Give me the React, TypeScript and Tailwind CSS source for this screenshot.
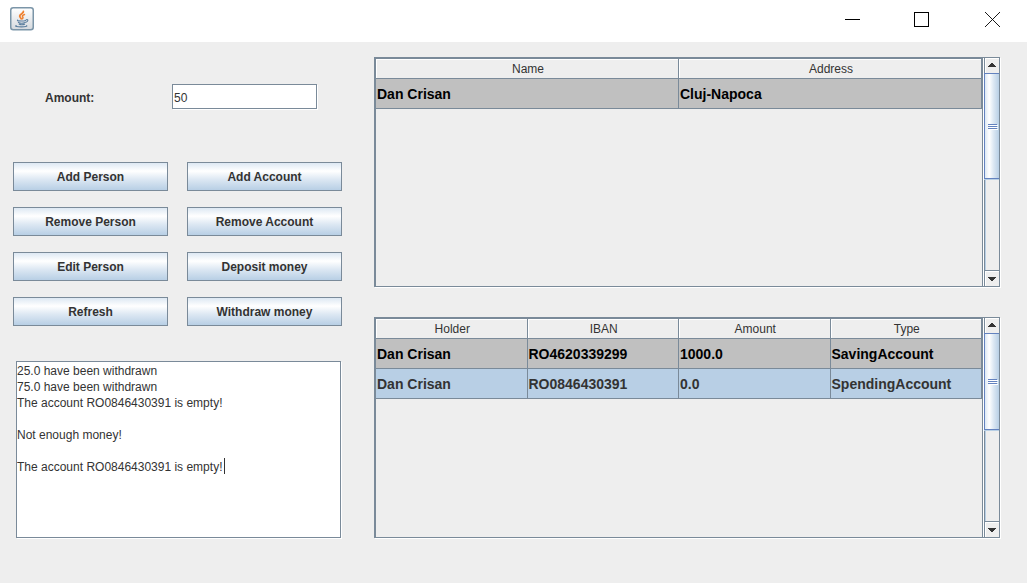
import React from "react";

const actions = [
  "Add Person",
  "Add Account",
  "Remove Person",
  "Remove Account",
  "Edit Person",
  "Deposit money",
  "Refresh",
  "Withdraw money",
];

const messages = [
  "25.0 have been withdrawn",
  "75.0 have been withdrawn",
  "The account RO0846430391 is empty!",
  "",
  "Not enough money!",
  "",
  "The account RO0846430391 is empty!",
].join("\n");

function JavaIcon() {
  return (
    <svg width="24" height="24" viewBox="0 0 24 24" aria-hidden="true">
      <defs>
        <linearGradient id="tile" x1="0" y1="0" x2="0" y2="1">
          <stop offset="0" stopColor="#ffffff" />
          <stop offset="1" stopColor="#d5d9de" />
        </linearGradient>
      </defs>
      <rect x="0.75" y="0.75" width="22.5" height="22" rx="2.5" fill="url(#tile)" stroke="#7b95a8" strokeWidth="1.5" />
      <g fill="none" strokeLinecap="round">
        <path d="M13.400 4.300c.6 1.900-3.700 2.700-3.700 4.800 0 1.300 1.200 1.700 1.500 2.700" stroke="#ef8130" strokeWidth="1.800" />
        <path d="M14.500 7.500c-2 .8-2.600 1.400-1.700 2.500.5.7.2 1.200-.4 1.700" stroke="#ef8130" strokeWidth="1.500" />
        <path d="M7.600 13c-.8.9 1.200 1 4 1 1.900 0 3.200-.2 4-.6M8.400 15.400c1.500.8 5 .8 6.800 0M9.200 17.300c1.600.6 3.800.6 5.400 0" stroke="#5c7f9f" strokeWidth="1.100" />
        <path d="M16.300 12.700c2.300-.5 2 1.800-.4 2.600M6.200 18.600c-1.500.8.900 1.300 5.200 1.300 3.800 0 6.300-.5 5.200-1.300" stroke="#5c7f9f" strokeWidth="1.100" />
      </g>
    </svg>
  );
}

function TitleBar() {
  const button = "flex h-[38px] w-[70px] items-center justify-center";
  return (
    <header className="flex h-[42px] items-start justify-between bg-white">
      <div className="pt-[7px] pl-[10px]">
        <JavaIcon />
      </div>
      <div className="flex">
        <button type="button" aria-label="Minimize" className={button}>
          <svg width="16" height="16" viewBox="0 0 16 16" shapeRendering="crispEdges">
            <path d="M1 8.500h15" stroke="#000" />
          </svg>
        </button>
        <button type="button" aria-label="Maximize" className={button}>
          <svg width="16" height="16" viewBox="0 0 16 16" shapeRendering="crispEdges">
            <path d="M.5 1.500h14v14h-14z" fill="none" stroke="#000" />
          </svg>
        </button>
        <button type="button" aria-label="Close" className={button}>
          <svg width="16" height="16" viewBox="0 0 16 16">
            <path d="M1 1l15 15M16 1L1 16" stroke="#000" strokeWidth="0.900" />
          </svg>
        </button>
      </div>
    </header>
  );
}

function Arrow({ down = false }: { down?: boolean }) {
  return (
    <svg width="8" height="4" viewBox="0 0 8 4" shapeRendering="crispEdges" aria-hidden="true">
      <path
        fill="#333"
        d={down ? "M0 0h8v1H7v1H6v1H5v1H3V3H2V2H1V1H0z" : "M3 0h2v1h1v1h1v1h1v1H0V3h1V2h1V1h1z"}
      />
    </svg>
  );
}

function ScrollBar({ thumb }: { thumb: string }) {
  return (
    <div className="ml-px flex w-[15px] shrink-0 flex-col border-l border-[#7a8a99] bg-[#eeeeee]">
      <button
        type="button"
        aria-label="Scroll up"
        className="flex h-[15px] shrink-0 items-center justify-center pb-px shadow-[inset_1px_1px_0_#ffffff]"
      >
        <Arrow />
      </button>
      <div className="flex-1 border-l border-[#b8cfe5]">
        <div
          className={`-ml-[2px] flex items-center justify-start border border-r-0 border-[#6382bf] bg-[linear-gradient(to_right,#dde8f3,#ffffff_30%,#dde8f3_60%,#b8cfe5)] pt-px pl-[3px] shadow-[0_1px_0_#b8cfe5] ${thumb}`}
        >
          <svg width="10" height="6" viewBox="0 0 10 6" shapeRendering="crispEdges" aria-hidden="true">
            <path fill="#fff" d="M1 1h9v1H1zM1 3h9v1H1zM1 5h9v1H1z" />
            <path fill="#6382bf" d="M0 0h9v1H0zM0 2h9v1H0zM0 4h9v1H0z" />
          </svg>
        </div>
      </div>
      <button
        type="button"
        aria-label="Scroll down"
        className="flex h-4 shrink-0 items-center justify-center border-t border-[#7a8a99] pt-px shadow-[inset_1px_1px_0_#ffffff]"
      >
        <Arrow down />
      </button>
    </div>
  );
}

interface DataTableProps {
  label: string;
  columns: string[];
  rows: string[][];
  selected?: number;
  height: string;
  thumb: string;
}

function DataTable({ label, columns, rows, selected, height, thumb }: DataTableProps) {
  return (
    <div className={`flex border border-[#7a8a99] bg-white shadow-[1px_1px_0_#ffffff] ${height}`}>
      <div className="min-w-0 flex-1 overflow-hidden border-x border-t border-[#7a8a99] bg-[#eeeeee]">
        <table aria-label={label} className="w-full table-fixed border-separate border-spacing-0">
          <thead>
            <tr>
              {columns.map((column) => (
                <th
                  key={column}
                  scope="col"
                  className="h-5 border-r border-b border-[#7a8a99] p-0 pt-px pl-[2px] text-center text-[12px] leading-[18px] font-normal shadow-[inset_1px_1px_0_#ffffff]"
                >
                  {column}
                </th>
              ))}
            </tr>
          </thead>
          <tbody>
            {rows.map((row, index) => (
              <tr key={index} className={index === selected ? "bg-[#b8cfe5] text-[#333333]" : "bg-[#c0c0c0] text-black"}>
                {row.map((cell, column) => (
                  <td
                    key={column}
                    className="h-[30px] border-r border-b border-[#7a8a99] p-0 pl-px text-[14px] leading-4 font-bold whitespace-nowrap"
                  >
                    {cell}
                  </td>
                ))}
              </tr>
            ))}
          </tbody>
        </table>
      </div>
      <ScrollBar thumb={thumb} />
    </div>
  );
}

export default function App() {
  return (
    <div className="min-h-screen bg-[#eeeeee] font-['Liberation_Sans',Arial,sans-serif] text-[12px] text-[#333333]">
      <TitleBar />
      <main className="flex gap-8 pr-[27px] pl-[13px]">
        <section className="w-[329px] shrink-0 pt-[42px]">
          <div className="flex items-center pl-8">
            <label htmlFor="amount" className="w-[127px] pt-[2px] font-bold">
              Amount:
            </label>
            <input
              id="amount"
              type="text"
              defaultValue="50"
              className="h-[25px] w-[145px] border border-[#7a8a99] bg-white px-px pt-[2px] shadow-[1px_1px_0_#ffffff] outline-none"
            />
          </div>
          <div className="mt-[53px] grid grid-cols-2 gap-x-[19px] gap-y-4">
            {actions.map((action) => (
              <button
                key={action}
                type="button"
                className="h-[29px] border border-[#7a8a99] bg-[linear-gradient(to_bottom,#dde8f3,#ffffff_30%,#dde8f3_60%,#b8cfe5)] font-bold"
              >
                {action}
              </button>
            ))}
          </div>
          <div className="relative mt-[35px] ml-[3px] w-[325px]">
            <textarea
              aria-label="Messages"
              defaultValue={messages}
              spellCheck={false}
              className="block h-[177px] w-full resize-none border border-[#7a8a99] bg-white pt-px leading-4 shadow-[1px_1px_0_#ffffff] outline-none"
            />
            <span aria-hidden="true" className="absolute top-[97px] left-[208px] h-4 w-px bg-[#333333]" />
          </div>
        </section>
        <section className="flex min-w-0 flex-1 flex-col gap-[30px] pt-[15px]">
          <DataTable
            label="Persons"
            columns={["Name", "Address"]}
            rows={[["Dan Crisan", "Cluj-Napoca"]]}
            height="h-[230px]"
            thumb="h-[106px]"
          />
          <DataTable
            label="Accounts"
            columns={["Holder", "IBAN", "Amount", "Type"]}
            rows={[
              ["Dan Crisan", "RO4620339299", "1000.0", "SavingAccount"],
              ["Dan Crisan", "RO0846430391", "0.0", "SpendingAccount"],
            ]}
            selected={1}
            height="h-[221px]"
            thumb="h-[97px]"
          />
        </section>
      </main>
    </div>
  );
}
